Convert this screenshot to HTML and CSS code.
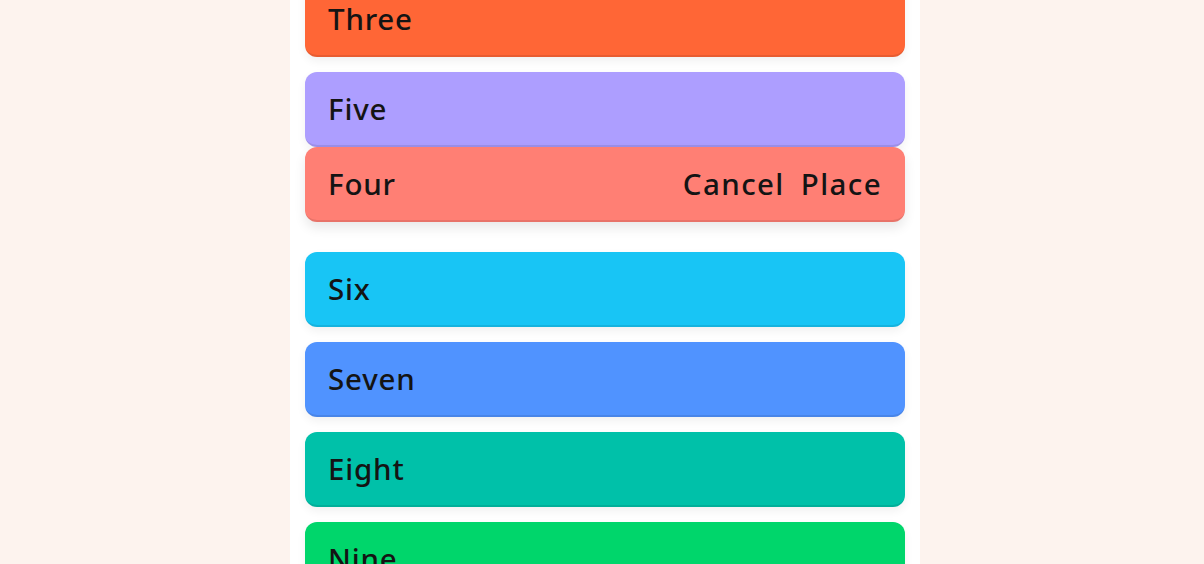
FILE: index.html
```html
<!DOCTYPE html>
<html>
<head>
<meta charset="utf-8">
<link rel="stylesheet" href="styles.css">
</head>
<body>
<main class="column">
  <ul class="list">
    <li class="card c-three"><span class="label">Three</span></li>
    <li class="card c-five"><span class="label">Five</span></li>
    <li class="card c-four dragging"><span class="label">Four</span>
      <div class="actions"><button class="act">Cancel</button><button class="act">Place</button></div>
    </li>
    <li class="card c-six"><span class="label">Six</span></li>
    <li class="card c-seven"><span class="label">Seven</span></li>
    <li class="card c-eight"><span class="label">Eight</span></li>
    <li class="card c-nine"><span class="label">Nine</span></li>
  </ul>
</main>
</body>
</html>
```

FILE: styles.css
```css
html, body {
  margin: 0;
  padding: 0;
  height: 100%;
  overflow: hidden;
}
body {
  background: #fdf3ee;
  font-family: "Noto Sans", "Lato", sans-serif;
  color: #141414;
}
.column {
  width: 630px;
  margin: 0 0 0 calc(50% - 312px);
  background: #ffffff;
  min-height: 100%;
  padding: 0 15px;
  box-sizing: border-box;
}
.list {
  list-style: none;
  margin: -18px 0 0 0;
  padding: 0;
  display: flex;
  flex-direction: column;
  gap: 15px;
}
.card {
  height: 75px;
  box-sizing: border-box;
  border-radius: 12px;
  border-bottom: 2px solid rgba(0, 0, 0, 0.09);
  box-shadow: 0 4px 10px rgba(0, 0, 0, 0.06);
  display: flex;
  align-items: center;
  justify-content: space-between;
  padding: 0 23px 0 23px;
}
.label {
  font-size: 29.5px;
  font-weight: 500;
  letter-spacing: 0.8px;
}
.actions {
  display: flex;
  gap: 16px;
}
.act {
  background: none;
  border: 0;
  padding: 0;
  font: inherit;
  font-size: 29.5px;
  font-weight: 500;
  letter-spacing: 1.4px;
  color: #141414;
}
.dragging {
  transform: translateY(-15px);
  box-shadow: 0 6px 12px rgba(0, 0, 0, 0.09);
  position: relative;
  z-index: 2;
}
.c-three { background: #ff6636; }
.c-five { background: #ad9eff; }
.c-four { background: #ff7f74; }
.c-six { background: #18c5f5; }
.c-seven { background: #5093ff; }
.c-eight { background: #00c1a9; }
.c-nine { background: #00d66b; }
```
